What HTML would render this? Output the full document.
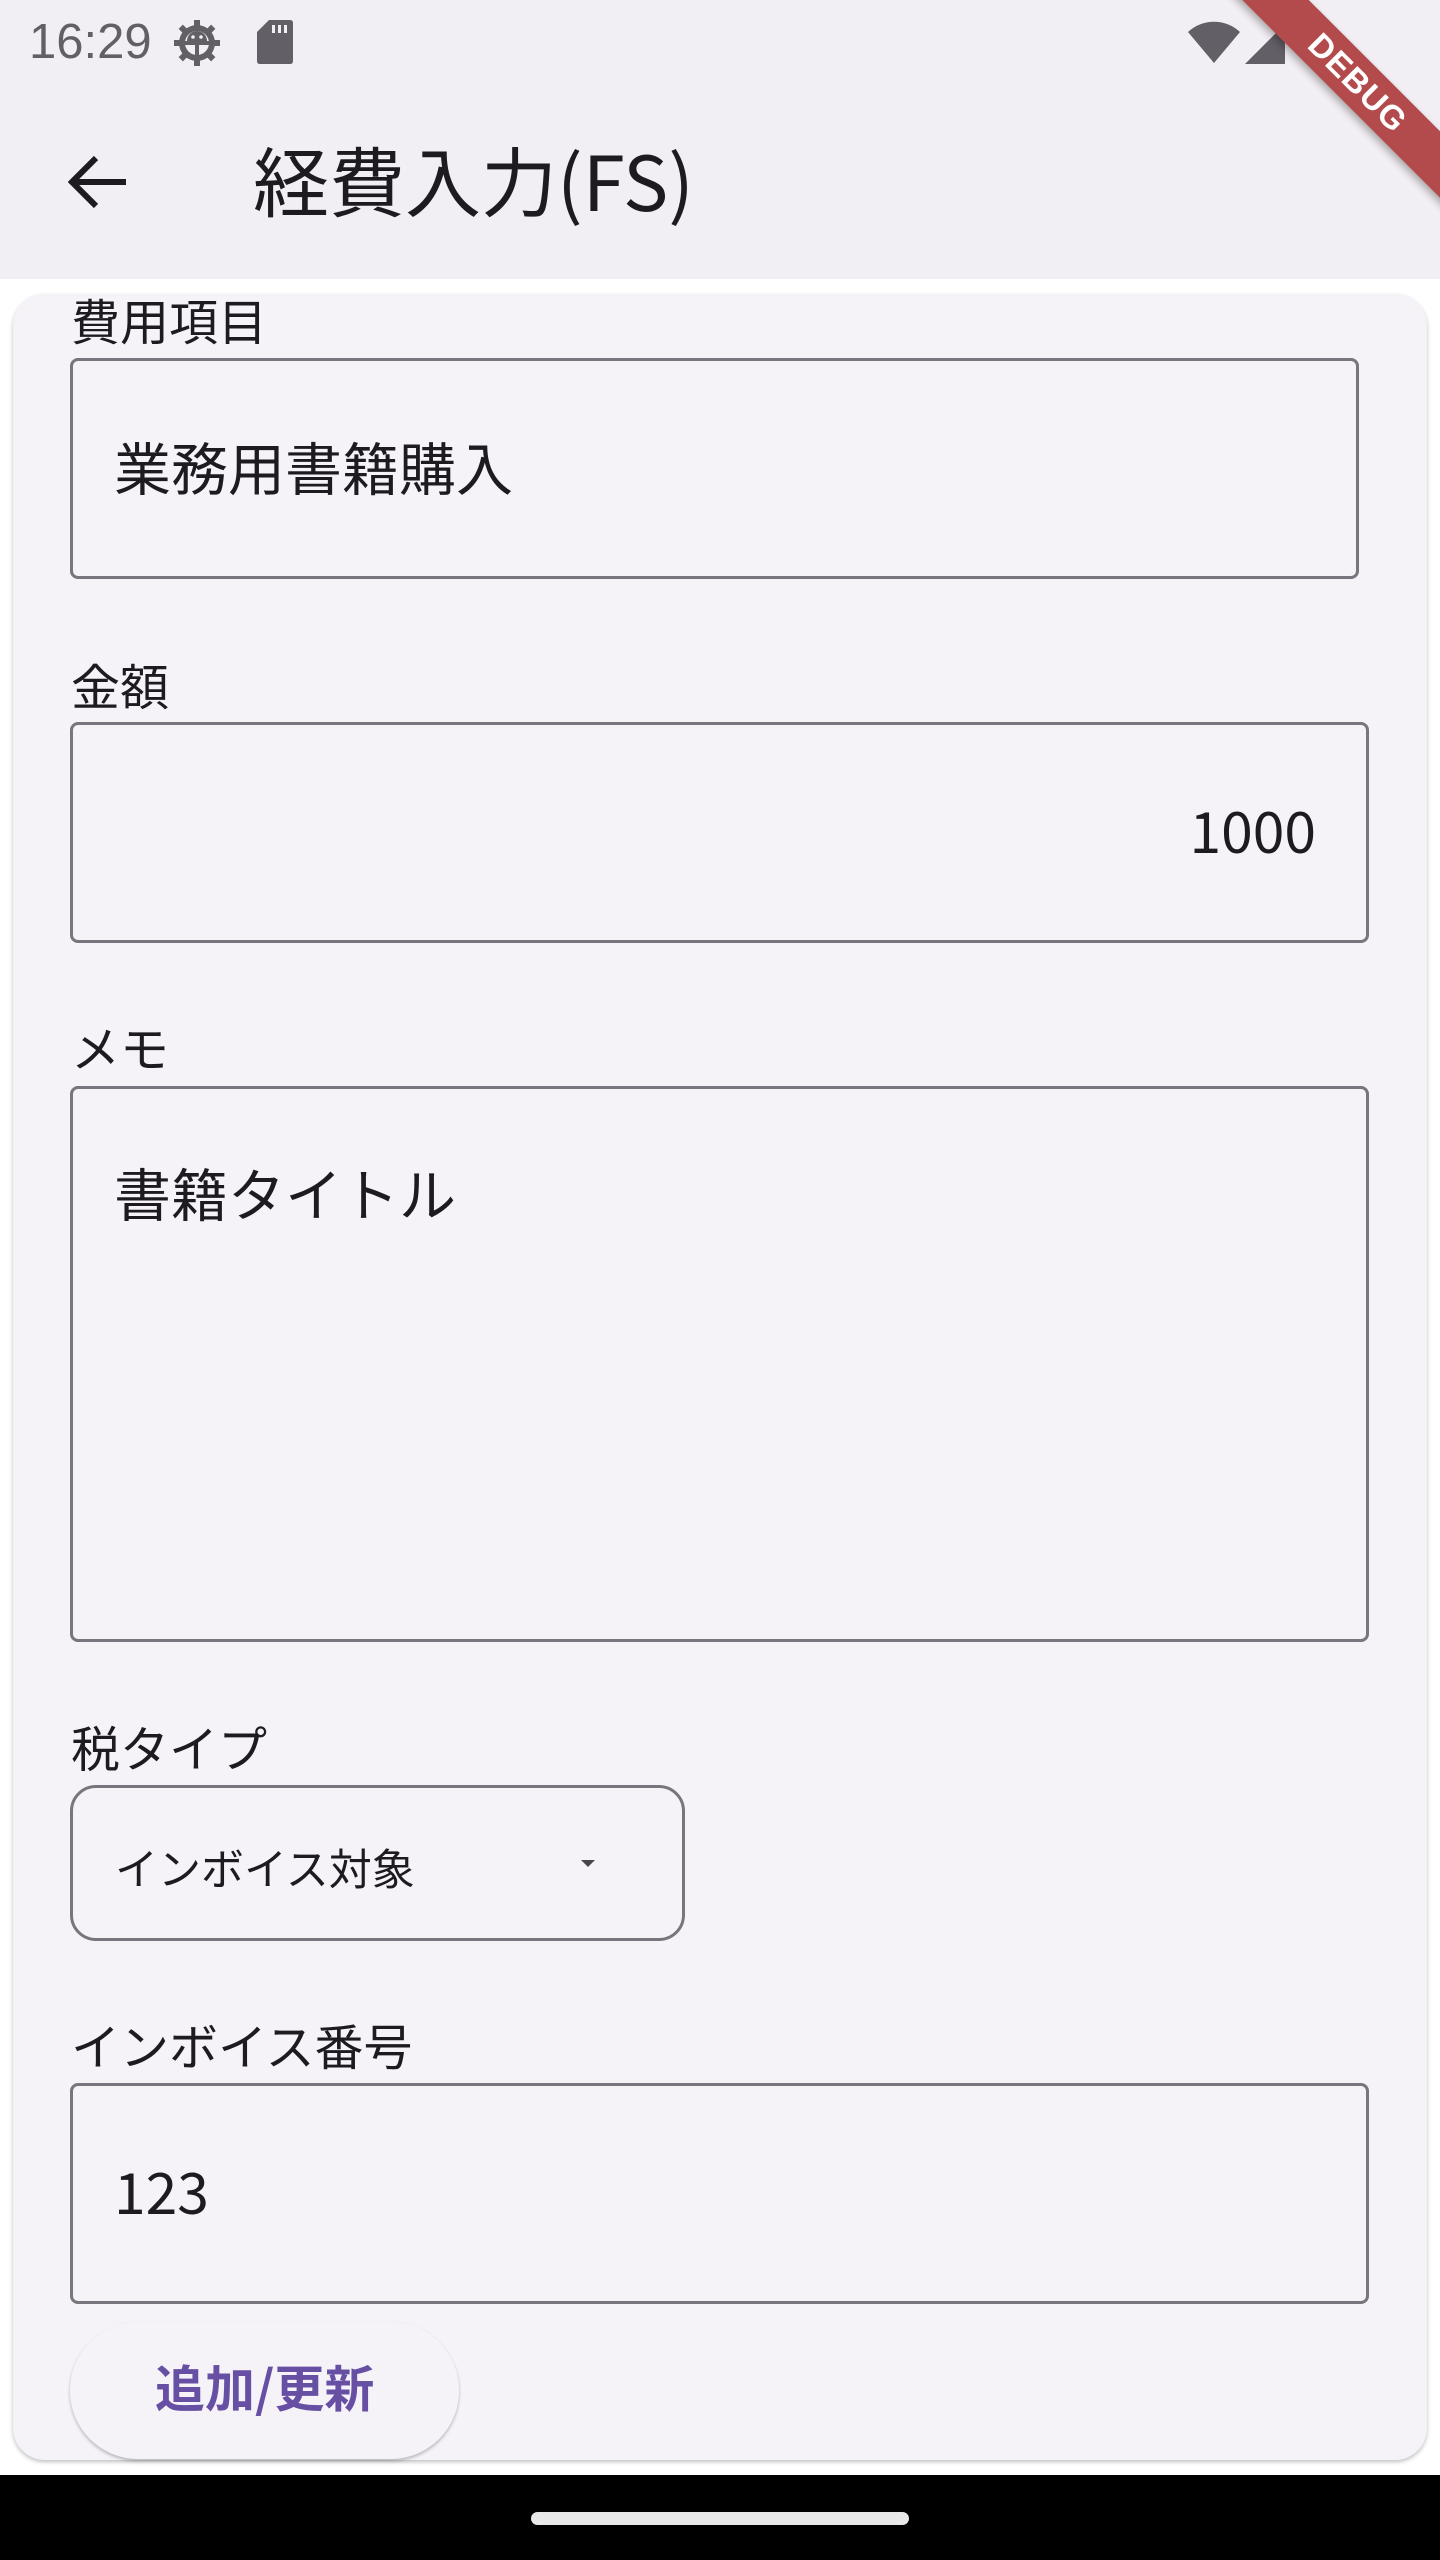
<!DOCTYPE html>
<html><head><meta charset="utf-8"><style>
*{margin:0;padding:0;box-sizing:border-box}
body{width:1440px;height:2560px;position:relative;background:#fff;font-family:"Noto Sans CJK JP","Liberation Sans",sans-serif;color:#1d1b20;overflow:hidden}
.abs{position:absolute}
.top{left:0;top:0;width:1440px;height:279px;background:#f2eff4}
.card{left:13px;top:294px;width:1414px;height:2166px;background:#f6f3f8;border-radius:32px;box-shadow:0 2px 4px rgba(0,0,0,.25)}
.lbl{font-size:49px;line-height:1;white-space:nowrap}
.box{border:3px solid #79747e;border-radius:8px}
.val{font-size:57px;line-height:1;white-space:nowrap}
.nav{left:0;top:2475px;width:1440px;height:85px;background:#000}
</style></head><body>
<div class="abs top"></div>
<div class="abs" style="left:29px;top:18px;font-size:49px;color:#625f66;line-height:1;font-family:'Liberation Sans',sans-serif">16:29</div>
<svg class="abs" style="left:172px;top:19px" width="50" height="48" viewBox="0 0 50 48"><g fill="#625f66"><circle cx="25" cy="24" r="18"/><g transform="translate(25 24)"><rect x="-3" y="-23" width="6" height="8"/><rect x="-3" y="15" width="6" height="8"/><rect x="-23" y="-3" width="8" height="6"/><rect x="15" y="-3" width="8" height="6"/><g transform="rotate(45)"><rect x="-3" y="-23" width="6" height="8"/><rect x="-3" y="15" width="6" height="8"/><rect x="-23" y="-3" width="8" height="6"/><rect x="15" y="-3" width="8" height="6"/></g></g></g><circle cx="25" cy="24" r="12" fill="#f2eff4"/><path d="M13 24 H37 M25 24 V36" stroke="#625f66" stroke-width="4"/><path d="M15 22 A10 10 0 0 1 35 22 Z" fill="#625f66"/><circle cx="21" cy="18" r="1.8" fill="#f2eff4"/><circle cx="29" cy="18" r="1.8" fill="#f2eff4"/></svg>
<svg class="abs" style="left:257px;top:20px" width="36" height="44" viewBox="0 0 36 44"><path d="M12 0 H33 Q36 0 36 3 V41 Q36 44 33 44 H3 Q0 44 0 41 V12 Z" fill="#625f66"/><rect x="15" y="5" width="3" height="8" fill="#f2eff4"/><rect x="21" y="5" width="3" height="8" fill="#f2eff4"/><rect x="27" y="5" width="3" height="8" fill="#f2eff4"/></svg>
<svg class="abs" style="left:1188px;top:19px" width="54" height="45" viewBox="0 0 54 45"><path d="M0 13 A38 38 0 0 1 52 13 L26 44 Z" fill="#625f66"/></svg>
<svg class="abs" style="left:1245px;top:20px" width="40" height="45" viewBox="0 0 40 45"><path d="M0 44 L44 0 V44 Z" fill="#625f66"/></svg>
<div class="abs" style="left:1203px;top:59px;width:310px;height:47px;background:#b34a4c;transform:rotate(45deg);color:#fff;font-weight:bold;font-size:33px;text-align:center;line-height:47px;letter-spacing:1px;box-shadow:0 4px 8px rgba(0,0,0,.3);font-family:'Liberation Sans',sans-serif">DEBUG</div>
<svg class="abs" style="left:68px;top:154px" width="60" height="56" viewBox="0 0 60 56"><path d="M58 28 H5 M28 4 L4 28 L28 52" fill="none" stroke="#1d1b20" stroke-width="6"/></svg>
<div class="abs" style="left:253px;top:140px;font-size:76px;line-height:1;white-space:nowrap">経費入力(FS)</div>
<div class="abs card"></div>

<div class="abs lbl" style="left:71px;top:295px">費用項目</div>
<div class="abs box" style="left:70px;top:358px;width:1289px;height:221px"></div>
<div class="abs val" style="left:114px;top:438px">業務用書籍購入</div>

<div class="abs lbl" style="left:71px;top:660px">金額</div>
<div class="abs box" style="left:70px;top:722px;width:1299px;height:221px"></div>
<div class="abs val" style="right:124px;top:801px">1000</div>

<div class="abs lbl" style="left:71px;top:1022px">メモ</div>
<div class="abs box" style="left:70px;top:1086px;width:1299px;height:556px"></div>
<div class="abs val" style="left:114px;top:1164px">書籍タイトル</div>

<div class="abs lbl" style="left:71px;top:1722px">税タイプ</div>
<div class="abs box" style="left:70px;top:1785px;width:615px;height:156px;border-radius:26px"></div>
<div class="abs" style="left:115px;top:1846px;font-size:43px;line-height:1;white-space:nowrap">インボイス対象</div>
<div class="abs" style="left:581px;top:1860px;width:0;height:0;border-left:7px solid transparent;border-right:7px solid transparent;border-top:7px solid #49454f"></div>

<div class="abs lbl" style="left:71px;top:2020px">インボイス番号</div>
<div class="abs box" style="left:70px;top:2083px;width:1299px;height:221px"></div>
<div class="abs val" style="left:114px;top:2162px">123</div>

<div class="abs" style="left:70px;top:2322px;width:389px;height:137px;border-radius:68px;background:#f6f3f8;box-shadow:0 2px 3px rgba(0,0,0,.25)"></div>
<div class="abs" style="left:155px;top:2361px;font-size:50px;font-weight:bold;color:#6750a4;line-height:1;white-space:nowrap">追加/更新</div>

<div class="abs nav"></div>
<div class="abs" style="left:531px;top:2512px;width:378px;height:13px;border-radius:7px;background:#e8e8e8"></div>
</body></html>
